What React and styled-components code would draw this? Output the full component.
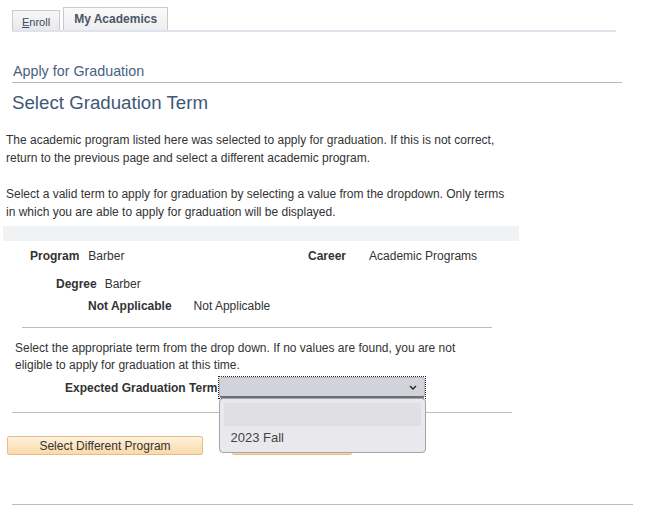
import React from "react";
import styled, { createGlobalStyle } from "styled-components";

const Global = createGlobalStyle`
  html, body { margin: 0; padding: 0; background: #fff; }
  body { font-family: Arial, "Liberation Sans", sans-serif; color: #333; font-size: 12px; }
`;

const Page = styled.div`
  width: 667px;
  height: 516px;
  overflow: hidden;
  display: flex;
  flex-direction: column;
`;

const TabStrip = styled.div`
  margin: 7px 0 0 12px;
  width: 604px;
  height: 23px;
  display: flex;
  align-items: flex-end;
  gap: 3px;
  border-bottom: 2px solid #dde4ee;
`;

const Tab = styled.div`
  box-sizing: border-box;
  height: ${(p) => (p.$active ? 23 : 20)}px;
  padding: 0 ${(p) => (p.$active ? 10 : 9)}px;
  display: flex;
  align-items: center;
  border: 1px solid #c9c9c9;
  border-bottom: none;
  background: ${(p) => (p.$active ? "linear-gradient(#fafafa, #eeeeee)" : "linear-gradient(#f8f8f8, #e9e9e9)")};
  font-size: ${(p) => (p.$active ? 12 : 11)}px;
  font-weight: ${(p) => (p.$active ? "bold" : "normal")};
  color: ${(p) => (p.$active ? "#4b5566" : "#3b4a5e")};
  padding-top: ${(p) => (p.$active ? 0 : 3)}px;
  u { text-decoration: underline; }
`;

const SubTitle = styled.div`
  margin: 30px 0 0 12px;
  width: 609px;
  padding: 0 0 2px 1px;
  font-size: 14.3px;
  line-height: 18px;
  color: #4a6180;
  border-bottom: 1px solid #b9b9b9;
`;

const Title = styled.h1`
  margin: 9px 0 0 12px;
  font-size: 18.7px;
  font-weight: normal;
  line-height: 22px;
  color: #3d5878;
`;

const Para = styled.p`
  margin: ${(p) => p.$top}px 0 0 6px;
  width: 510px;
  font-size: 12px;
  line-height: 18px;
  color: #333;
`;

const Band = styled.div`
  margin: 5px 0 0 3px;
  width: 516px;
  height: 15px;
  background: #f1f2f3;
`;

const FieldRow = styled.div`
  display: flex;
  align-items: center;
  height: 18px;
  margin-top: ${(p) => p.$top}px;
  padding-left: ${(p) => p.$indent}px;
`;

const Pair = styled.div`
  display: flex;
  align-items: center;
  gap: ${(p) => p.$gap}px;
  width: ${(p) => (p.$width ? `${p.$width}px` : "auto")};
`;

const Label = styled.span`
  font-weight: bold;
  color: #333;
`;

const Value = styled.span`
  color: #333;
`;

const Rule = styled.div`
  margin: ${(p) => p.$top}px 0 0 ${(p) => p.$left}px;
  width: ${(p) => p.$width}px;
  height: 1px;
  background: #bdbdbd;
`;

const Instruction = styled.p`
  margin: 12px 0 0 15px;
  width: 470px;
  font-size: 12px;
  line-height: 17px;
`;

const TermRow = styled.div`
  display: flex;
  align-items: center;
  margin: 3px 0 0 65px;
  gap: 2px;
  height: 21px;
`;

const SelectWrap = styled.div`
  position: relative;
  width: 206px;
  height: 21px;
  outline: 1px dotted #222;
  outline-offset: 0;
`;

const SelectBox = styled.div`
  box-sizing: border-box;
  height: 21px;
  border: 1px solid #b8b9c2;
  border-bottom: 2px solid #6c6d78;
  border-radius: 3px;
  background: #d2d3da;
  display: flex;
  align-items: center;
  justify-content: flex-end;
  padding-right: 7px;
`;

const Menu = styled.div`
  position: absolute;
  top: 21px;
  left: 0;
  box-sizing: border-box;
  width: 207px;
  height: 55px;
  background: #e9e9ed;
  border: 1px solid #a3a3ab;
  border-radius: 4px;
  padding: 4px 4px 0;
  z-index: 5;
`;

const Option = styled.div`
  height: 23px;
  display: flex;
  align-items: center;
  padding-left: 6px;
  background: ${(p) => (p.$hl ? "#dfdfe4" : "transparent")};
  font-size: 13px;
  color: #444;
`;

const Buttons = styled.div`
  display: flex;
  margin: 23px 0 0 7px;
  gap: 29px;
`;

const Button = styled.button`
  box-sizing: border-box;
  width: ${(p) => p.$width}px;
  height: 19px;
  padding: 0;
  border: 1px solid #e3bd8a;
  border-radius: 2px;
  background: linear-gradient(#fdf2dc, #fad9a8);
  font-family: Arial, "Liberation Sans", sans-serif;
  font-size: 12px;
  color: #333;
`;

function Chevron() {
  return (
    <svg width="8" height="5" viewBox="0 0 8 5">
      <path d="M1 1 L4 4 L7 1" fill="none" stroke="#222" strokeWidth="1.4" />
    </svg>
  );
}

export default function App() {
  return (
    <Page>
      <Global />
      <TabStrip>
        <Tab>
          <span><u>E</u>nroll</span>
        </Tab>
        <Tab $active>My Academics</Tab>
      </TabStrip>
      <SubTitle>Apply for Graduation</SubTitle>
      <Title>Select Graduation Term</Title>
      <Para $top={17}>
        The academic program listed here was selected to apply for graduation. If this is not correct,
        return to the previous page and select a different academic program.
      </Para>
      <Para $top={18}>
        Select a valid term to apply for graduation by selecting a value from the dropdown. Only terms
        in which you are able to apply for graduation will be displayed.
      </Para>
      <Band />
      <FieldRow $top={6} $indent={30}>
        <Pair $gap={9} $width={278}>
          <Label>Program</Label>
          <Value>Barber</Value>
        </Pair>
        <Pair $gap={23}>
          <Label>Career</Label>
          <Value>Academic Programs</Value>
        </Pair>
      </FieldRow>
      <FieldRow $top={10} $indent={56}>
        <Pair $gap={8}>
          <Label>Degree</Label>
          <Value>Barber</Value>
        </Pair>
      </FieldRow>
      <FieldRow $top={4} $indent={88}>
        <Pair $gap={22}>
          <Label>Not Applicable</Label>
          <Value>Not Applicable</Value>
        </Pair>
      </FieldRow>
      <Rule $top={12} $left={22} $width={470} />
      <Instruction>
        Select the appropriate term from the drop down. If no values are found, you are not
        eligible to apply for graduation at this time.
      </Instruction>
      <TermRow>
        <Label>Expected Graduation Term</Label>
        <SelectWrap>
          <SelectBox>
            <Chevron />
          </SelectBox>
          <Menu>
            <Option $hl> </Option>
            <Option>2023 Fall</Option>
          </Menu>
        </SelectWrap>
      </TermRow>
      <Rule $top={14} $left={12} $width={500} />
      <Buttons>
        <Button $width={196}>Select Different Program</Button>
        <Button $width={120} aria-label="Submit" />
      </Buttons>
      <Rule $top={49} $left={12} $width={621} />
    </Page>
  );
}
